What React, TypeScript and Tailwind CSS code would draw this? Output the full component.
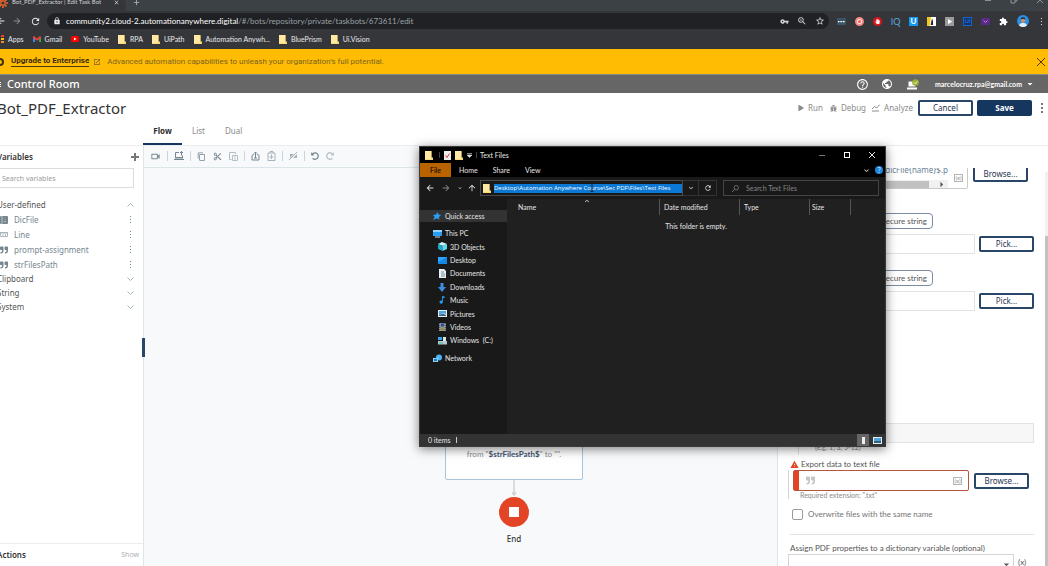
import React from "react";
import { clsx } from "clsx";
import {
  MdAdd, MdArrowBack, MdArrowForward, MdClose, MdContentCopy, MdContentCut,
  MdExpandLess, MdExtension, MdHelpOutline, MdLock, MdOpenInNew,
  MdOutlineVideocam, MdPublic, MdRefresh, MdStarBorder, MdVpnKey, MdWarning, MdZoomIn,
  MdArrowDropDown, MdArrowUpward, MdPlayArrow, MdMusicNote, MdKeyboardArrowDown, MdArrowRight,
} from "react-icons/md";
import { FaBug, FaQuoteRight, FaPlay, FaHandPaper, FaRedoAlt, FaUndoAlt } from "react-icons/fa";

type Kids = { children?: React.ReactNode };

function Folder({ className = "h-2.5 w-2" }: { className?: string }) {
  return (
    <svg viewBox="0 0 8 10" className={clsx("shrink-0", className)}>
      <path d="M0 1h6.600v6.400H8V10H0z" fill="#f7d774" />
      <path d="M0 1h6.200v8.200H0z" fill="#ffe9a2" />
    </svg>
  );
}

function GmailIcon() {
  return (
    <svg viewBox="0 0 16 12" className="h-1.5 w-2">
      <path d="M0 2v10h4V6z" fill="#4285f4" />
      <path d="M16 2v10h-4V6z" fill="#34a853" />
      <path d="M0 1.500 2 0l6 5 6-5 2 1.500V4L8 9.500 0 4z" fill="#ea4335" />
    </svg>
  );
}

function YouTubeIcon() {
  return (
    <svg viewBox="0 0 16 12" className="h-1.5 w-2">
      <rect width="16" height="12" rx="3" fill="#f00" />
      <path d="M6 3v6l5-3z" fill="#fff" />
    </svg>
  );
}

function Dots() {
  return (
    <svg viewBox="0 0 3 9" className="h-[9px] w-[3px] shrink-0">
      <path d="M1 1h1v1H1zM1 4h1v1H1zM1 7h1v1H1z" fill="currentColor" />
    </svg>
  );
}

function TabStrip() {
  return (
    <div className="flex h-[11px] items-start overflow-hidden bg-[#3c4145]">
      <div className="flex h-[11px] w-[126px] shrink-0 items-center gap-1 rounded-tr bg-[#35363a]">
        <svg viewBox="0 0 10 10" className="-mt-1.5 -ml-0.5 h-2.5 w-2.5">
          <g stroke="#f1662a" strokeWidth="1.600">
            <path d="M5 0v10M0 5h10M1.500 1.500l7 7M8.500 1.500l-7 7" />
          </g>
          <circle cx="5" cy="5" r="1.600" fill="#35363a" />
        </svg>
        <span className="-mt-2 w-[97px] shrink-0 text-[6px] leading-[14px] whitespace-nowrap text-[#d0d2d5]">
          Bot_PDF_Extractor | Edit Task Bot
        </span>
        <button aria-label="Close tab" className="-mt-1.5 text-[#d0d2d5]"><MdClose size={7} /></button>
      </div>
      <button aria-label="New tab" className="-mt-0.5 ml-1.5 text-[#b7babd]"><MdAdd size={9} /></button>
      <div className="-mt-1 ml-auto flex gap-[18px] pr-1 text-[#909396]">
        <svg viewBox="0 0 8 8" className="size-2"><path d="M1 4.500h6" stroke="currentColor" /></svg>
        <svg viewBox="0 0 8 8" className="size-2"><path d="M1 3h4v4H1zM3 3V1h4v4H5" stroke="currentColor" fill="none" /></svg>
        <svg viewBox="0 0 8 8" className="size-2"><path d="m1 1 6 6M7 1 1 7" stroke="currentColor" /></svg>
      </div>
    </div>
  );
}

function Extensions() {
  const cell = "flex size-[9px] items-center justify-center";
  return (
    <div className="flex items-center gap-[9px] pr-px pl-2">
      <svg viewBox="0 0 9 9" className="size-[9px]"><path d="M0 1h9v7H0z" fill="#3a5468" /><path d="M1 4h1.500v1.200H1zM3.300 4h1.500v1.200H3.300zM5.600 4h2v1.200h-2z" fill="#fff" /></svg>
      <span className={clsx(cell, "rounded-full border-2 border-[#f58a86] bg-[#fbe3e1]")}><i className="size-[3px] rounded-full bg-[#e8605a]" /></span>
      <span className={clsx(cell, "rounded-full bg-[#d8171c] text-white")}><FaHandPaper size={5} /></span>
      <span className={clsx(cell, "text-[9px] leading-none text-[#5aa9e0]")}>IQ</span>
      <span className={clsx(cell, "bg-[#1397f5] text-[8px] leading-none font-bold text-white")}>U</span>
      <svg viewBox="0 0 9 9" className="size-[9px]"><path d="M0 0h9v9H0z" fill="#fff" /><path d="M0 0h4L2.500 9H0z" fill="#f2c718" /><path d="M5 1.500 3.600 8H6V4z" fill="#222" /></svg>
      <span className={clsx(cell, "bg-[#9b9b9b] text-white")}><MdPlayArrow size={9} /></span>
      <span className={clsx(cell, "border border-[#1767c4] bg-[#12306a] text-[6px] leading-none text-[#2a86f0]")}>Ui</span>
      <svg viewBox="0 0 9 9" className="size-[9px]"><rect y="1" width="9" height="7" rx="1" fill="#5b2a86" /><path d="m2.500 3.500 2 2 2-2" stroke="#b98ae0" fill="none" /></svg>
      <MdExtension size={9} className="text-white" />
      <svg viewBox="0 0 12 12" className="size-3">
        <circle cx="6" cy="6" r="6" fill="#2b8fe6" />
        <path d="M2 10.500C3 8 5 8 6 8s3 0 4 2.500A6 6 0 0 1 2 10.500z" fill="#e8eef5" />
        <ellipse cx="6" cy="5.200" rx="2" ry="2.600" fill="#c98f70" />
        <path d="M3.800 4.500C3.500 1.500 8.500 1.500 8.200 4.500 7.500 3.600 4.500 3.600 3.800 4.500z" fill="#221a18" />
      </svg>
      <span className="mr-1 ml-0.5 text-[#e0e0e0]"><Dots /></span>
    </div>
  );
}

function AddressRow() {
  return (
    <div className="flex h-5 items-center bg-[#35363a] text-[#e8eaed]">
      <button aria-label="Back" className="-ml-1"><MdArrowBack size={10} /></button>
      <button aria-label="Forward" className="ml-1.5 text-[#8b8d91]"><MdArrowForward size={10} /></button>
      <button aria-label="Reload" className="ml-2"><MdRefresh size={11} /></button>
      <div className="ml-1.5 flex h-4 grow items-center rounded-full bg-[#202124] pr-1 pl-1.5">
        <MdLock size={8} />
        <span className="ml-[5px] text-[8px] whitespace-nowrap text-white">
          community2.cloud-2.automationanywhere.digital<span className="text-[#9aa0a6]">/#/bots/repository/private/taskbots/673611/edit</span>
        </span>
        <span className="ml-auto flex items-center gap-2 text-[#d5d7da]">
          <MdVpnKey size={9} /><MdZoomIn size={10} /><MdStarBorder size={10} />
        </span>
      </div>
      <Extensions />
    </div>
  );
}

function Bookmark({ icon, children }: Kids & { icon: React.ReactNode }) {
  return (
    <a href="#" className="flex items-center gap-1 whitespace-nowrap">
      {icon}<span>{children}</span>
    </a>
  );
}

function Bookmarks() {
  return (
    <nav className="flex h-[18px] items-center gap-[9px] bg-[#35363a] pb-0.5 pl-px text-[7px] text-[#e8eaed]">
      <Bookmark icon={<span className="grid h-2 w-[3px] gap-px"><i className="bg-[#ea4335]" /><i className="bg-[#fbbc04]" /><i className="bg-[#f28b20]" /></span>}>Apps</Bookmark>
      <Bookmark icon={<GmailIcon />}>Gmail</Bookmark>
      <Bookmark icon={<YouTubeIcon />}>YouTube</Bookmark>
      <Bookmark icon={<Folder />}>RPA</Bookmark>
      <Bookmark icon={<Folder />}>UiPath</Bookmark>
      <Bookmark icon={<Folder />}>Automation Anywh...</Bookmark>
      <Bookmark icon={<Folder />}>BluePrism</Bookmark>
      <Bookmark icon={<Folder />}>Ui.Vision</Bookmark>
    </nav>
  );
}

function Banner() {
  return (
    <div className="flex h-[25px] items-center bg-[#ffbc03] font-['Roboto',sans-serif] text-[8px] text-[#7b6322]">
      <span className="-ml-1 size-2 rounded-full border-2 border-[#3d3310]" />
      <a href="#" className="ml-[7px] border-b border-[#4a3a05] leading-[10px] font-bold text-[#3a2d03]">Upgrade to Enterprise</a>
      <MdOpenInNew size={8} className="ml-1" />
      <span className="ml-1.5">Advanced automation capabilities to unleash your organization’s full potential.</span>
      <button aria-label="Dismiss" className="mr-[3px] ml-auto">
        <svg viewBox="0 0 8 8" className="size-2 text-[#4a3a05]"><path d="m0 0 8 8M8 0 0 8" stroke="currentColor" /></svg>
      </button>
    </div>
  );
}

function ControlBar() {
  return (
    <div className="flex h-[19px] items-center border-t border-[#8a8a8a] bg-[#666] text-white">
      <span className="grid w-px gap-px"><i className="h-px bg-white" /><i className="h-px bg-white" /><i className="h-px bg-white" /></span>
      <span className="ml-1.5 font-['Noto_Sans',sans-serif] text-[11px] font-medium">Control Room</span>
      <div className="ml-auto flex items-center pr-3">
        <MdHelpOutline size={13} />
        <MdPublic size={12} className="ml-3" />
        <svg viewBox="0 0 12 11" className="ml-3.5 h-[11px] w-3">
          <path d="M1.500 2.500h7v5h-7zM0 8.500h10v2H0z" fill="#fff" />
          <circle cx="8.500" cy="3.500" r="3.300" fill="#9caf2f" />
          <path d="m7 3.500 1.200 1.200L10.300 2.400" stroke="#fff" strokeWidth=".9" fill="none" />
        </svg>
        <button className="ml-4 flex items-center gap-0.5 text-[7px] font-bold">marcelocruz.rpa@gmail.com <MdArrowDropDown size={12} /></button>
      </div>
    </div>
  );
}

function OutlineButton({ children, className }: Kids & { className?: string }) {
  return (
    <button className={clsx("flex h-4 w-[55px] shrink-0 items-center justify-center rounded-xs border-2 border-[#294567] bg-white font-['Noto_Sans',sans-serif] text-[8px] text-[#1f3552]", className)}>
      {children}
    </button>
  );
}

function PageHeader() {
  return (
    <header className="flex h-[53px] shrink-0 flex-col justify-between border-b border-[#ececec] bg-white font-['Noto_Sans',sans-serif]">
      <div className="flex h-[30px] items-center">
        <h1 className="-ml-[3px] text-[15px] text-[#333]">Bot_PDF_Extractor</h1>
        <div className="ml-auto flex items-center text-[8px] text-[#8a8a8a]">
          <button className="flex items-center gap-1"><FaPlay size={6} />Run</button>
          <button className="ml-[7px] flex items-center gap-1"><FaBug size={7} />Debug</button>
          <button className="ml-1.5 flex items-center gap-1">
            <svg viewBox="0 0 8 8" className="size-2"><path d="M0 5 2.500 2.500 4.500 4 8 .5M0 7h7" stroke="currentColor" fill="none" /></svg>
            Analyze
          </button>
          <OutlineButton className="ml-[5px]">Cancel</OutlineButton>
          <button className="ml-1 h-4 w-[55px] rounded-xs bg-[#14365f] text-[8px] font-bold text-white">Save</button>
          <button aria-label="More" className="mr-[5px] ml-[9px] text-[#777]">
            <svg viewBox="0 0 2 10" className="h-2.5 w-0.5"><path d="M0 0h2v2H0zM0 4h2v2H0zM0 8h2v2H0z" fill="currentColor" /></svg>
          </button>
        </div>
      </div>
      <div className="flex gap-2.5 pl-[143px] text-[8px] text-[#8a8a8a]" role="tablist">
        <button role="tab" aria-selected="true" className="h-[22px] w-[39px] border-b-2 border-[#14365f] pb-1 font-bold text-[#2b2b2b]">Flow</button>
        <button role="tab" aria-selected="false" className="h-[22px] pb-1.5">List</button>
        <button role="tab" aria-selected="false" className="ml-2.5 h-[22px] pb-1.5">Dual</button>
      </div>
    </header>
  );
}

function VariableRow({ icon, name }: { icon: React.ReactNode; name: string }) {
  return (
    <li className="flex h-[15px] items-center pr-[3px] text-[#75868f]">
      <span className="flex w-[17px] items-center">{icon}</span>
      <span>{name}</span>
      <span className="ml-auto"><Dots /></span>
    </li>
  );
}

function Group({ name, open }: { name: string; open?: boolean }) {
  return (
    <button className="flex h-[14px] w-full items-center justify-between">
      {name}
      <svg viewBox="0 0 7 4" className="mr-px h-1 w-[7px]" fill="none" stroke="#a9b3b8">
        <path d={open ? "M.5 3.500l3-3 3 3" : "M.5 .5l3 3 3-3"} />
      </svg>
    </button>
  );
}

function Sidebar() {
  return (
    <aside className="flex w-36 shrink-0 border-r border-[#dce7ea] bg-white font-['Noto_Sans',sans-serif]">
      <div className="-ml-[3px] flex grow flex-col text-[8px] text-[#555]">
        <div className="flex h-[22px] items-center justify-between pr-1">
          <span className="font-semibold text-[#333]">Variables</span>
          <button aria-label="Add variable" className="text-[#777]"><svg viewBox="0 0 8 8" className="size-2"><path d="M4 0v8M0 4h8" stroke="currentColor" strokeWidth="2" /></svg></button>
        </div>
        <input aria-label="Search variables" placeholder="Search variables" className="mr-[9px] h-5 border border-[#dcdcdc] pl-1 text-[7px] placeholder:text-[#9b9b9b]" />
        <div className="mt-2.5 pr-2">
          <Group name="User-defined" open />
          <ul>
            <VariableRow name="DicFile" icon={<svg viewBox="0 0 8 8" className="ml-[3px] size-2"><rect x="0" y="0" width="8" height="8" rx="1" fill="#75868f" /><path d="M2 0v8M4 5.500h2M4 2.500l1 1" stroke="#fff" strokeWidth=".5" /></svg>} />
            <VariableRow name="Line" icon={<svg viewBox="0 0 8 6" className="ml-[3px] h-1.5 w-2"><path d="M.5 .5h7v4h-7zM0 1h8M3 2v2M5.500 2v2" stroke="#9aa8af" strokeWidth=".8" fill="none" /></svg>} />
            <VariableRow name="prompt-assignment" icon={<FaQuoteRight size={8} className="ml-[3px]" />} />
            <VariableRow name="strFilesPath" icon={<FaQuoteRight size={8} className="ml-[3px]" />} />
          </ul>
          <Group name="Clipboard" />
          <Group name="String" />
          <Group name="System" />
        </div>
        <div className="mt-auto flex h-[23px] items-center justify-between border-t border-[#ececec] pr-1">
          <span className="font-semibold text-[#333]">Actions</span>
          <button className="text-[7px] text-[#b0b0b0]">Show</button>
        </div>
      </div>
    </aside>
  );
}

function Sep() {
  return <i className="-mx-px h-2.5 w-px bg-[#c9d3d8]" />;
}

function Toolbar() {
  return (
    <div className="flex h-[22px] items-center gap-[7px] border-b border-[#dbe5e9] pb-px pl-1.5 text-[#74868f]">
      <MdOutlineVideocam size={11} />
      <Sep />
      <svg viewBox="0 0 10 10" className="size-2.5" fill="none" stroke="currentColor"><path d="M1.500 6.500v-5H5M8.500 4.500v2M0 8.500h10" /><path d="M1 6h8v1.500H1z" fill="currentColor" stroke="none" /><path d="M7.500 4.500V.5M6 2l1.500-1.500L9 2" /></svg>
      <Sep />
      <MdContentCopy size={9} />
      <MdContentCut size={9} />
      <svg viewBox="0 0 9 10" className="h-2.5 w-[9px] opacity-50" fill="none" stroke="currentColor"><path d="M2.500 8.500h-2v-7h6V3M2 1.500h3" /><path d="M3.500 4.500h5v5h-5z" /><path d="M5 6h2M5 8h2" strokeWidth=".8" /></svg>
      <Sep />
      <svg viewBox="0 0 9 10" className="h-2.5 w-[9px]" fill="none" stroke="currentColor"><path d="M3 3 1 4.500v4.500h7V4.500L6 3M4.500 7V1M3 2.500 4.500 1 6 2.500M3 7h3" /></svg>
      <svg viewBox="0 0 9 10" className="h-2.5 w-[9px] opacity-60" fill="none" stroke="currentColor"><path d="M1 2h7v7.500H1zM3 2V.5h3V2M4.500 3.500V8M2.500 6h4" /></svg>
      <Sep />
      <svg viewBox="0 0 9 10" className="h-2.5 w-[9px] opacity-60" fill="none" stroke="currentColor"><path d="M0 9 8 1" /><path d="M1 7V3h4zM8 3v4H4z" fill="currentColor" stroke="none" /></svg>
      <Sep />
      <FaUndoAlt size={8} />
      <FaRedoAlt size={8} className="opacity-50" />
    </div>
  );
}

function Canvas() {
  return (
    <main className="relative flex min-w-0 grow flex-col bg-[#f8f9fb]">
      <i className="absolute top-[192px] -left-0.5 h-[19px] w-[3px] bg-[#294567]" />
      <Toolbar />
      <div className="relative grow overflow-hidden">
        <div className="absolute top-[212px] left-[301px] flex w-[138px] flex-col items-center text-[8px]">
          <div className="flex h-[100px] w-full items-end justify-center rounded-xs border border-[#a9c6da] bg-white pb-[19px] text-[#8b8b8b]">
            <p>from "<b className="text-[#3f5573]">$strFilesPath$</b>" to "".</p>
          </div>
          <svg viewBox="0 0 8 16" className="h-4 w-2"><path d="M4 0v14M2 12.500 4 15l2-2.500" stroke="#cfd2d6" strokeWidth="1.500" fill="none" /></svg>
          <div className="mt-px flex size-[30px] items-center justify-center rounded-full bg-[#e24425]"><i className="size-2.5 bg-white" /></div>
          <span className="mt-1.5 font-['Noto_Sans',sans-serif] font-medium text-[#333]">End</span>
        </div>
      </div>
    </main>
  );
}

function VarBadge() {
  return <span className="flex h-2 w-[9px] items-center justify-center border border-[#b5b5b5] text-[6px] leading-none text-[#8a8a8a]">(x)</span>;
}

function PickRow({ label }: { label: string }) {
  return (
    <div>
      <button className="ml-[60px] flex h-4 w-[83px] items-center justify-end rounded-sm border border-[#7a8ba3] pr-[5px] text-[8px] whitespace-nowrap text-[#555]">Insecure string</button>
      <div className="mt-[5px] flex items-center gap-1">
        <input aria-label={label} className="h-5 min-w-0 grow border border-[#e2e2e2]" />
        <OutlineButton>Pick...</OutlineButton>
      </div>
    </div>
  );
}

function Properties() {
  return (
    <section className="flex w-[271px] shrink-0 border-l border-[#dce7ea] bg-white pt-[22px]">
      <div className="flex min-w-0 grow flex-col overflow-hidden pr-[11px] pl-3 text-[8px] text-[#555]">
        <div className="-mt-3 flex shrink-0 items-end gap-[5px] pr-1.5">
          <div className="flex h-[33px] grow items-end rounded-xs border border-[#c9c9c9] pr-1">
            <div className="flex grow flex-col">
              <span className="self-end font-['Noto_Sans',sans-serif] leading-[11px] text-[#6a7f95]">$dicFile{"{name}"}$.p</span>
              <span className="mt-[5px] flex h-2 items-center bg-[#f1f1f1]"><i className="h-[7px] grow bg-[#c1c1c1]" /><MdArrowRight size={13} className="ml-1.5" /></span>
            </div>
            <span className="mb-1.5 ml-1.5"><VarBadge /></span>
          </div>
          <OutlineButton className="mb-[7px]">Browse...</OutlineButton>
        </div>
        <div className="mt-6"><PickRow label="User password" /></div>
        <div className="mt-4"><PickRow label="Owner password" /></div>
        <input aria-label="Page range" className="mt-28 h-5 shrink-0 border border-[#e2e2e2] bg-[#f7f7f7]" />
        <div className="ml-2 flex h-3 shrink-0 items-start border-l border-[#e2e2e2] pl-4 text-[7px] leading-[8px] text-[#8a8a8a]">(e.g. 1, 3, 5-12)</div>
        <label htmlFor="export" className="mt-1 flex shrink-0 items-center gap-0.5 leading-[11px]"><MdWarning size={9} className="text-[#e24425]" />Export data to text file</label>
        <div className="-ml-0.5 shrink-0 border-l border-[#d5d5d5] pl-1">
          <div className="flex items-center gap-[5px] pr-[5px]">
            <div className="flex h-[21px] grow items-center rounded-xs border border-[#b5543f] pr-1.5">
              <i className="h-full w-[5px] bg-[#e24425]" />
              <FaQuoteRight size={9} className="ml-[7px] text-[#c5c5c5]" />
              <input id="export" className="h-full min-w-0 flex-1" />
              <VarBadge />
            </div>
            <OutlineButton>Browse...</OutlineButton>
          </div>
          <p className="pl-[7px] text-[7px] leading-2 text-[#8a8a8a]">Required extension: ".txt"</p>
        </div>
        <label className="mt-[9px] flex shrink-0 items-center gap-[5px] pl-0.5 text-[#757575]">
          <input type="checkbox" className="size-[11px] appearance-none rounded-xs border border-[#9b9b9b]" />
          Overwrite files with the same name
        </label>
        <hr className="mt-3.5 shrink-0 border-[#e2e2e2]" />
        <label htmlFor="dict" className="mt-2 leading-[11px]">Assign PDF properties to a dictionary variable (optional)</label>
        <div className="-ml-0.5 flex shrink-0 items-start gap-1">
          <div className="flex h-5 grow items-center justify-end border border-[#d5d5d5]">
            <select id="dict" className="h-full min-w-0 flex-1 appearance-none"><option></option></select>
            <MdArrowDropDown size={13} />
          </div>
          <span className="w-4 pt-0.5">(x)</span>
        </div>
      </div>
      <div className="mt-1 flex w-[3px] flex-col bg-[#f1f1f1] pt-16"><i className="grow bg-[#c1c1c1]" /></div>
    </section>
  );
}

function NavItem({ icon, children, root, active }: Kids & { icon: React.ReactNode; root?: boolean; active?: boolean }) {
  return (
    <a href="#" className={clsx("flex items-center gap-1 whitespace-nowrap", active ? "h-3 bg-[#333]" : "h-[13px]", root ? "pl-[13px]" : "pl-[18px]")}>
      <span className="flex w-2 justify-center">{icon}</span>{children}
    </a>
  );
}

function Monitor() {
  return <svg viewBox="0 0 9 9" className="size-[9px] shrink-0"><rect y="1" width="9" height="6" fill="#2a9df4" /><path d="M0 1h9v2H0z" fill="#8fd3ff" /><path d="M2 8h5" stroke="#cfd8dc" /></svg>;
}

function Explorer() {
  return (
    <div role="dialog" aria-label="Text Files" className="absolute top-[146px] left-[419px] flex h-[301px] w-[467px] flex-col border border-[#3a3a3a] bg-[#202020] text-[7px] text-[#e6e6e6] shadow-[0_2px_10px_rgba(0,0,0,0.5)]">
      <div className="flex h-4 shrink-0 items-center bg-black pl-[5px]">
        <Folder />
        <i className="ml-1.5 h-1.5 w-px bg-[#444]" />
        <svg viewBox="0 0 7 9" className="ml-1 h-[9px] w-[7px]"><path d="M0 0h7v9H0z" fill="#eee" /><path d="m1.500 4.500 1.500 2L5.500 2.500" stroke="#d33" fill="none" /></svg>
        <Folder className="ml-1 h-2.5 w-2" />
        <svg viewBox="0 0 5 5" className="ml-1 size-[5px]"><path d="M0 .5h5M0 2h5L2.500 4.500z" stroke="#ddd" strokeWidth=".6" fill="#ddd" /></svg>
        <i className="ml-1 h-1.5 w-px bg-[#444]" />
        <span className="ml-[3px]">Text Files</span>
        <div className="ml-auto flex items-center gap-[19px] pr-2.5">
          <button aria-label="Minimize" className="h-px w-1.5 bg-[#777]" />
          <button aria-label="Maximize" className="size-1.5 border border-white" />
          <button aria-label="Close"><svg viewBox="0 0 6 6" className="size-1.5"><path d="m0 0 6 6M6 0 0 6" stroke="#fff" strokeWidth=".9" /></svg></button>
        </div>
      </div>
      <div className="flex h-[14px] shrink-0 items-center bg-black">
        <button className="h-full w-[31px] bg-[#b86200] text-black">File</button>
        <button className="ml-2">Home</button>
        <button className="ml-[15px]">Share</button>
        <button className="ml-[15px]">View</button>
        <MdKeyboardArrowDown size={9} className="ml-auto" />
        <span className="mr-0.5 ml-1 flex size-2 items-center justify-center rounded-full bg-[#1b87e0] text-[7px] leading-none">?</span>
      </div>
      <div className="flex h-[22px] shrink-0 items-center bg-[#191919] pr-1.5 pl-[5px]">
        <MdArrowBack size={10} />
        <MdArrowForward size={10} className="ml-1.5 text-[#888]" />
        <MdKeyboardArrowDown size={6} className="ml-1.5" />
        <MdArrowUpward size={10} className="ml-1" />
        <div className="relative ml-[3px] flex h-4 w-[203px] items-center border border-[#4a4a4a] pl-0.5">
          <Folder />
          <input aria-label="Address" defaultValue="Desktop\Automation Anywhere Course\Sec PDF\Files\Text Files" className="ml-[3px] h-[9px] w-[188px] bg-[#0a78d4] font-['Open_Sans',sans-serif] text-[6px] text-white" />
          <svg viewBox="0 0 4 9" className="absolute top-0.5 left-[109px] h-[9px] w-1"><path d="M.5 .5h3M.5 8.500h3M2 .5v8" stroke="#111" strokeWidth=".8" /></svg>
        </div>
        <span className="flex h-4 w-4 items-center justify-center border-y border-r border-[#333]"><MdKeyboardArrowDown size={8} /></span>
        <button aria-label="Refresh" className="flex h-4 w-[18px] items-center justify-center border-y border-r border-[#333]"><MdRefresh size={8} /></button>
        <div className="ml-1.5 flex h-4 grow items-center border border-[#444] pl-2 text-[#888]">
          <svg viewBox="0 0 7 7" className="size-[7px]"><circle cx="4.300" cy="2.700" r="2.200" stroke="currentColor" strokeWidth=".7" fill="none" /><path d="M2.700 4.300 0 7" stroke="currentColor" strokeWidth=".8" /></svg>
          <input aria-label="Search" placeholder="Search Text Files" className="ml-[7px] w-24 text-[7px] placeholder:text-[#858585]" />
        </div>
      </div>
      <div className="flex min-h-0 grow">
        <nav className="w-[87px] shrink-0 bg-[#191919] pt-[11px]">
          <NavItem root active icon={<svg viewBox="0 0 8 8" className="size-2"><path d="m4.500 0 1 2.500L8 3 6 5l.3 2.700L4 6.300 0 8l1.700-3L0 3l3-.5z" fill="#2a9df4" /></svg>}>Quick access</NavItem>
          <div className="mt-[5px] flex h-[120px] flex-col justify-between">
            <NavItem root icon={<Monitor />}>This PC</NavItem>
            <NavItem icon={<svg viewBox="0 0 9 9" className="size-[9px] shrink-0"><path d="M0 2 4 0l5 2-4 2z" fill="#c9f4fb" /><path d="M0 2l4.500 2v5L0 7z" fill="#1fa9c4" /><path d="M9 2 4.500 4v5L9 7z" fill="#5fdcef" /></svg>}>3D Objects</NavItem>
            <NavItem icon={<svg viewBox="0 0 9 7" className="h-[7px] w-[9px] shrink-0"><path d="M0 0h9v7H0z" fill="#1287e8" /><path d="M0 0h9L0 5z" fill="#30a5ff" /></svg>}>Desktop</NavItem>
            <NavItem icon={<svg viewBox="0 0 8 9" className="h-[9px] w-2 shrink-0"><path d="M1 0h5l2 2v7H1z" fill="#e8eef2" /><path d="M3 3h3M3 5h4M3 7h4" stroke="#557b96" strokeWidth=".8" /></svg>}>Documents</NavItem>
            <NavItem icon={<svg viewBox="0 0 8 9" className="h-[9px] w-2 shrink-0"><path d="M2.500 0h3v4H8L4 9 0 4h2.500z" fill="#3c8fe0" /></svg>}>Downloads</NavItem>
            <NavItem icon={<MdMusicNote size={10} className="shrink-0 text-[#2a9df4]" />}>Music</NavItem>
            <NavItem icon={<svg viewBox="0 0 9 7" className="h-[7px] w-[9px] shrink-0"><path d="M0 0h9v7H0z" fill="#e4edf3" /><path d="M1 1h7v3L5 3 1 5z" fill="#4aa3df" /><path d="M1 5l4-1.500L8 5v1H1z" fill="#44677c" /></svg>}>Pictures</NavItem>
            <NavItem icon={<svg viewBox="0 0 7 8" className="h-2 w-[7px] shrink-0"><path d="M0 0h7v8H0z" fill="#8b98a5" /><path d="M2 .5h3v3H2z" fill="#2c4f91" /><path d="M2 4.500h3v3H2z" fill="#a68a38" /><path d="M.7 0v8M6.300 0v8" stroke="#222" strokeWidth=".7" strokeDasharray="1 1" /></svg>}>Videos</NavItem>
            <NavItem icon={<svg viewBox="0 0 9 8" className="h-2 w-[9px] shrink-0"><path d="M0 4h9v3.500H0z" fill="#b9c7d1" /><path d="M0 0h4v3H0z" fill="#35a5e8" /><path d="M5 0h3v4H5z" fill="#dfe6ea" /><path d="M1 6h4" stroke="#35c0a0" /></svg>}>Windows&nbsp; (C:)</NavItem>
          </div>
          <div className="mt-[5px]">
            <NavItem root icon={<svg viewBox="0 0 9 9" className="size-[9px] shrink-0"><circle cx="6" cy="3.500" r="3" fill="#4db5f5" /><path d="M0 4h5v4H0z" fill="#b3e0fb" /><path d="M.7 4.700h3.600v2.600H.7z" fill="#1a83cf" /></svg>}>Network</NavItem>
          </div>
        </nav>
        <div className="grow">
          <table className="w-[344px] text-left">
            <thead>
              <tr className="h-4">
                <th className="relative border-r border-[#555] pl-[11px] font-normal">Name<MdExpandLess size={8} className="absolute -top-0.5 left-[76px]" /></th>
                <th className="w-20 border-r border-[#555] pl-1 font-normal">Date modified</th>
                <th className="w-[70px] border-r border-[#555] pl-1 font-normal">Type</th>
                <th className="w-[41px] border-r border-[#555] pl-0.5 font-normal">Size</th>
              </tr>
            </thead>
          </table>
          <p className="mt-1.5 text-center">This folder is empty.</p>
        </div>
      </div>
      <footer className="flex h-3 shrink-0 items-center bg-[#333] pl-2">
        0 items<i className="ml-[5px] h-1.5 w-px bg-[#ccc]" />
        <button aria-label="Details" className="ml-auto flex h-full w-3 items-center justify-center bg-[#666]"><i className="h-[7px] w-[3px] bg-[#eee]" /></button>
        <button aria-label="Large icons" className="flex w-4 justify-center"><svg viewBox="0 0 9 7" className="h-[7px] w-[9px]"><path d="M0 0h9v7H0z" fill="#e4edf3" /><path d="M1 1h7v3H1z" fill="#4aa3df" /><path d="M1 4h7v2H1z" fill="#376179" /></svg></button>
      </footer>
    </div>
  );
}

export default function App() {
  return (
    <div className="relative flex h-screen flex-col overflow-hidden bg-white font-['Lato',sans-serif]">
      <div className="shrink-0">
        <TabStrip />
        <AddressRow />
        <Bookmarks />
        <Banner />
        <ControlBar />
      </div>
      <PageHeader />
      <div className="flex min-h-0 grow">
        <Sidebar />
        <Canvas />
        <Properties />
      </div>
      <Explorer />
    </div>
  );
}
